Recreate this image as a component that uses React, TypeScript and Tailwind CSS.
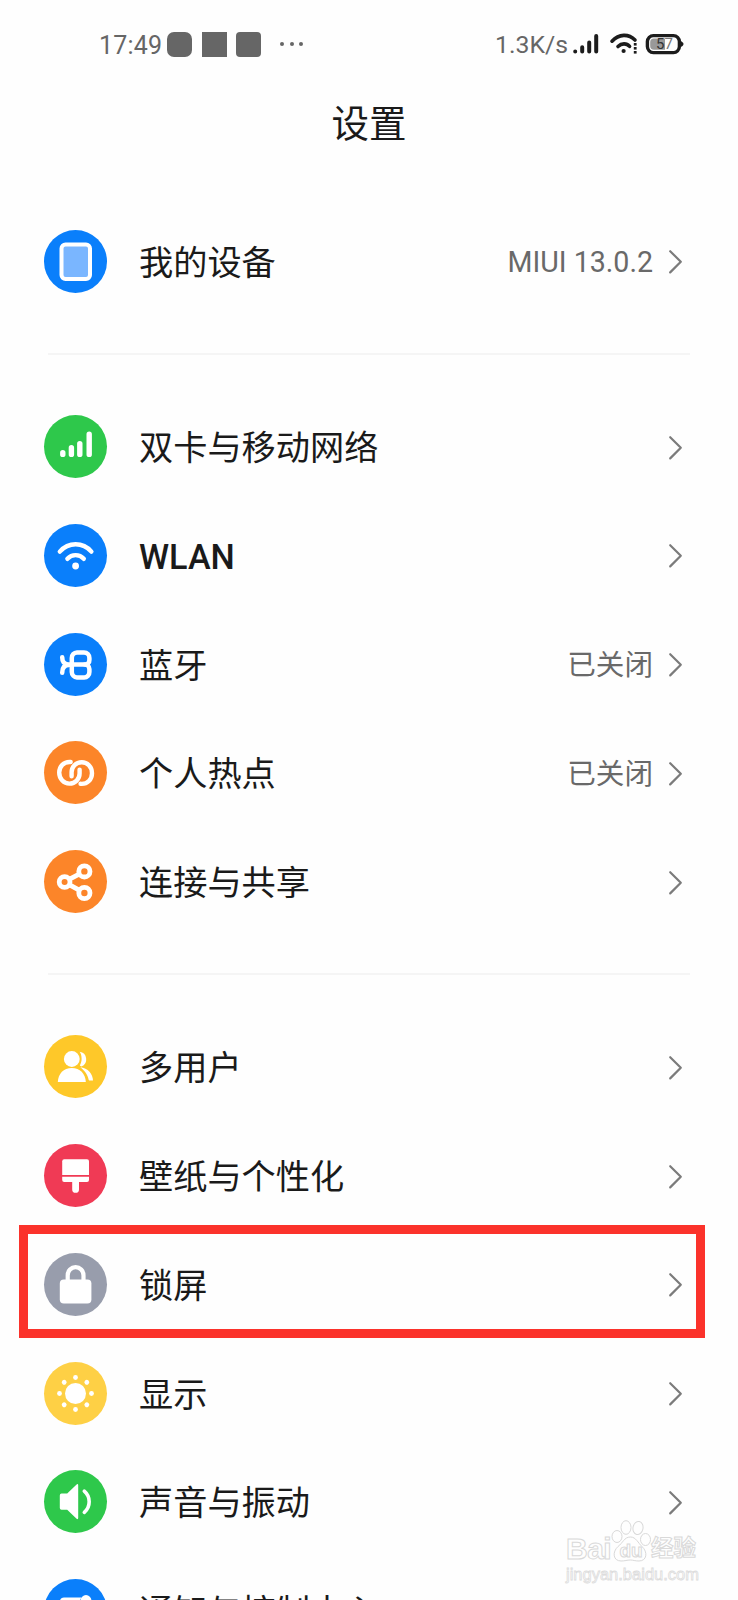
import type { ReactNode } from "react";

type Item = {
  label: string;
  color: string;
  icon: ReactNode;
  value?: string;
  bold?: boolean;
  marked?: boolean;
};

const DeviceIcon = () => (
  <>
    <rect x="17.5" y="14.5" width="28.5" height="34.5" rx="5" fill="#7ab6ff" />
    <rect x="17.5" y="14.5" width="28.5" height="34.5" rx="4" fill="none" stroke="#fff" strokeWidth="4" />
  </>
);

const SignalIcon = () => (
  <g stroke="#fff" strokeWidth="5.4" strokeLinecap="round">
    <path d="M18.8 37.8v1.6M27.4 32.8v6.6M35.8 28.6v10.8M45.2 19.2v20.2" />
  </g>
);

const WifiIcon = () => (
  <g fill="none" stroke="#fff" strokeWidth="4.4" strokeLinecap="round">
    <path d="M15.8 27.6C24.5 17.8 38.8 17.8 47.4 27.6" />
    <path d="M23.4 34.8C27.8 29.9 35.4 29.9 39.8 34.8" />
    <circle cx="31.6" cy="42" r="3.4" fill="#fff" stroke="none" />
  </g>
);

const BluetoothIcon = () => (
  <g fill="none" stroke="#fff" strokeWidth="4.5" strokeLinecap="round" strokeLinejoin="round">
    <path d="M18.2 24.2C18.2 29 20.5 31.6 25 31.6H41.5M18.2 39.8C18.2 34.8 20.5 32 25 32" />
    <path d="M27.8 31.6V25A5.5 5.5 0 0 1 33 19.4H40A5.4 5.4 0 0 1 45.4 25V27A4.4 4.4 0 0 1 41 31.6A4.6 4.6 0 0 1 45.4 36V39A5.2 5.2 0 0 1 40 44.4H33A5.4 5.4 0 0 1 27.8 39Z" />
  </g>
);

const HotspotIcon = () => (
  <g fill="none" stroke="#fff" strokeWidth="4.4" strokeLinecap="round">
    <path d="M26.6 21C19.6 20.4 15.2 25.6 15.2 31.6C15.2 38 20 42.6 25.4 42.6C31.4 42.6 35.6 38 35.6 32.6V28.6" />
    <path
      d="M26.6 21C19.6 20.4 15.2 25.6 15.2 31.6C15.2 38 20 42.6 25.4 42.6C31.4 42.6 35.6 38 35.6 32.6V28.6"
      transform="rotate(180 31.6 31.9)"
    />
  </g>
);

const ShareIcon = () => (
  <g fill="none" stroke="#fff" strokeWidth="4.8">
    <circle cx="20.6" cy="32" r="5.4" />
    <circle cx="40.4" cy="21.4" r="5.6" />
    <circle cx="40.4" cy="43" r="5.6" />
    <path d="M25.6 29.2L35.2 24.2M25.6 34.8L35.2 40.2" />
  </g>
);

const UsersIcon = () => (
  <g fill="#fff">
    <path d="M35.6 16.8A7.6 7.6 0 0 1 37.4 31.4C34.2 30.4 37.6 29.4 37.6 23.9C37.6 20.4 36.8 18.4 35.6 16.8Z" />
    <path d="M36.2 32.2C44 32.8 49 39.4 49 45.6H46.2C44.6 45.6 44.6 44.6 44.2 43C43.2 39 39.8 34.8 36.2 32.2Z" />
    <circle cx="27.8" cy="24" r="7.9" />
    <path d="M13.8 47C14.2 38.6 19.6 33 27.8 33C36 33 41.4 38.6 41.8 47Z" />
  </g>
);

const BrushIcon = () => (
  <g fill="#fff">
    <path d="M20.2 15.2H43Q45 15.2 45 17.2V31H18.2V17.2Q18.2 15.2 20.2 15.2Z" />
    <path d="M18.2 32.8H45V36Q45 37.9 43 37.9H35V45.4A3.4 3.4 0 0 1 28.2 45.4V37.9H20.2Q18.2 37.9 18.2 36Z" />
  </g>
);

const LockIcon = () => (
  <>
    <path d="M23.7 30V22.4A7.9 8.3 0 0 1 39.5 22.4V30" fill="none" stroke="#fff" strokeWidth="4.2" />
    <rect x="15.8" y="26.6" width="31.6" height="24" rx="4" fill="#fff" />
  </>
);

const SunIcon = () => (
  <g fill="#fff">
    <circle cx="31.5" cy="31.5" r="10.5" />
    {[0, 45, 90, 135, 180, 225, 270, 315].map((a) => (
      <circle key={a} cx="31.5" cy="15.5" r="2.4" transform={`rotate(${a} 31.5 31.5)`} />
    ))}
  </g>
);

const SoundIcon = () => (
  <>
    <path
      d="M17.5 23.6H23.2L32.6 14.4Q34.2 13.4 34.2 15.2V47.8Q34.2 49.8 32.6 48.8L23.2 39.8H17.5Q15.8 39.8 15.8 38V25.4Q15.8 23.6 17.5 23.6Z"
      fill="#fff"
    />
    <path d="M40.3 21.2C46.8 26.8 46.8 36.8 40.3 42.4" fill="none" stroke="#fff" strokeWidth="3.6" strokeLinecap="round" />
  </>
);

const NoticeIcon = () => (
  <g fill="#fff">
    <path d="M20 18.5H37.5A7 7 0 0 0 36.8 26V48H20Q16 48 16 44V22.5Q16 18.5 20 18.5Z" />
    <circle cx="42" cy="21.5" r="5.4" />
  </g>
);

const groups: Item[][] = [
  [{ label: "我的设备", color: "bg-[#0a7ffb]", icon: <DeviceIcon />, value: "MIUI 13.0.2" }],
  [
    { label: "双卡与移动网络", color: "bg-[#2ec84b]", icon: <SignalIcon /> },
    { label: "WLAN", color: "bg-[#0a7ffb]", icon: <WifiIcon />, bold: true },
    { label: "蓝牙", color: "bg-[#0a7ffb]", icon: <BluetoothIcon />, value: "已关闭" },
    { label: "个人热点", color: "bg-[#fc8529]", icon: <HotspotIcon />, value: "已关闭" },
    { label: "连接与共享", color: "bg-[#fc8529]", icon: <ShareIcon /> },
  ],
  [
    { label: "多用户", color: "bg-[#fec829]", icon: <UsersIcon /> },
    { label: "壁纸与个性化", color: "bg-[#f03a55]", icon: <BrushIcon /> },
    { label: "锁屏", color: "bg-[#989dac]", icon: <LockIcon />, marked: true },
    { label: "显示", color: "bg-[#fed045]", icon: <SunIcon /> },
    { label: "声音与振动", color: "bg-[#2ec84b]", icon: <SoundIcon /> },
    { label: "通知与控制中心", color: "bg-[#0a7ffb]", icon: <NoticeIcon /> },
  ],
];

const StatusBar = () => (
  <div className="flex h-[88px] shrink-0 items-center justify-between pr-[54px] pl-[99px] text-[25px] text-[#666]">
    <div className="flex items-center">
      <span className="w-[68px] pt-[3px] tracking-[0.2px]">17:49</span>
      <div className="flex gap-[9.5px]">
        <div className="size-[25px] rounded-[7px] bg-[#666]" />
        <div className="size-[25px] bg-[#666]" />
        <div className="size-[25px] rounded-[4px] bg-[#666]" />
      </div>
      <div className="ml-[19px] flex gap-[5.5px]">
        <div className="size-1 rounded-full bg-[#666]" />
        <div className="size-1 rounded-full bg-[#666]" />
        <div className="size-1 rounded-full bg-[#666]" />
      </div>
    </div>
    <div className="flex items-center">
      <span className="pt-[2px] text-[24.8px]">1.3K/s</span>
      <svg className="ml-1" width="112" height="26" viewBox="0 0 112 26">
        <g stroke="#1c1c1c" strokeWidth="4" strokeLinecap="round" fill="none">
          <path d="M3.2 20.4v.2M10.2 16.2v4.4M17.2 11.4v9.2M24.2 5v15.6" />
          <path d="M40 10.2C47 2.6 56.6 2.6 63 9" strokeWidth="3.6" />
          <path d="M46 15.6C49.6 12 54.6 12 57.6 15.4" strokeWidth="3.6" />
        </g>
        <g fill="#1c1c1c">
          <circle cx="51.6" cy="20" r="2.1" />
          <rect x="61.8" y="12" width="2.8" height="2.6" />
          <rect x="61.8" y="16" width="2.8" height="2.6" />
          <rect x="61.8" y="20" width="2.8" height="2.6" />
          <path d="M107.5 9.5Q111.5 11 111.5 13Q111.5 15 107.5 16.5Z" />
        </g>
        <rect x="75.4" y="4.6" width="32" height="17" rx="6" fill="#fefefe" stroke="#1c1c1c" strokeWidth="3.4" />
        <path d="M82 7.4H93V18.8H82Q78.2 18.8 78.2 15V11Q78.2 7.4 82 7.4Z" fill="#999" />
        <text x="84" y="18.4" fontSize="15" fill="#333">
          5<tspan fill="#777">7</tspan>
        </text>
      </svg>
    </div>
  </div>
);

const Row = ({ item }: { item: Item }) => (
  <div className="relative flex h-[108.75px] shrink-0 items-center pr-[55px] pl-11">
    {item.marked && (
      <div className="absolute top-[-5px] left-[19px] h-[113px] w-[686px] border-[9px] border-[#fb322b]" />
    )}
    <div className={`size-[63px] shrink-0 rounded-full ${item.color}`}>
      <svg width="63" height="63" viewBox="0 0 63 63">
        {item.icon}
      </svg>
    </div>
    <span
      className={`ml-8 grow pt-[3px] text-[34.2px] leading-[48px] text-[#1a1a1a] ${item.bold ? "font-medium" : ""}`}
    >
      {item.label}
    </span>
    {item.value && <span className="pt-[3px] text-[28.6px] text-[#696969]">{item.value}</span>}
    <svg className="ml-[15px]" width="15" height="26" viewBox="0 0 15 26" fill="none">
      <path d="M2.2 3.2L12.8 13.8L2.2 24.4" stroke="#7b7b7b" strokeWidth="2.2" strokeLinecap="round" strokeLinejoin="round" />
    </svg>
  </div>
);

const Watermark = () => (
  <div className="absolute top-[1518px] left-[566px] w-[135px] font-['Liberation_Sans','Noto_Sans_CJK_SC',sans-serif] text-[#fefefe] [-webkit-text-stroke:1px_#d9d9d9]">
    <div className="flex h-[46px] items-end">
      <span className="w-[45px] text-[30px] leading-[30px] font-bold tracking-[-0.5px]">Bai</span>
      <svg className="shrink-0" width="40" height="46" viewBox="0 0 40 46" fill="#fefefe" stroke="#d9d9d9">
        <ellipse cx="6" cy="18.5" rx="5" ry="6" />
        <ellipse cx="15" cy="9.5" rx="5" ry="6.8" />
        <ellipse cx="27" cy="10" rx="5" ry="6.6" transform="rotate(12 27 10)" />
        <ellipse cx="34.5" cy="21.5" rx="5" ry="6" />
        <path d="M19.5 19C25 19 27 25 31 28.5C37 34 36 43 28 43C24 43 22 42 19.5 42C16 42 14 43 10 43C2 43 1 34 7 28.5C12 25 13 19 19.5 19Z" />
        <text x="8.5" y="39" fontSize="19" fontWeight="bold">
          du
        </text>
      </svg>
      <span className="text-[22.5px] leading-[31px] font-bold">经验</span>
    </div>
    <div className="text-[16.5px] leading-5 whitespace-nowrap [-webkit-text-stroke:0.8px_#dcdcdc]">
      jingyan.baidu.com
    </div>
  </div>
);

export default function App() {
  return (
    <div className="relative flex h-[1600px] w-[738px] flex-col overflow-hidden bg-[#fefefe] font-[Roboto,'Noto_Sans_CJK_SC',sans-serif]">
      <StatusBar />
      <h1 className="h-[119px] shrink-0 pt-2 text-center text-[37.5px] leading-[56px] text-[#1a1a1a]">设置</h1>
      {groups.map((items, i) => (
        <div key={i} className="shrink-0">
          {i > 0 && <div className="mt-[37.25px] mr-12 mb-[37.25px] ml-12 h-[2px] bg-[#f5f5f5]" />}
          {items.map((item) => (
            <Row key={item.label} item={item} />
          ))}
        </div>
      ))}
      <Watermark />
    </div>
  );
}
